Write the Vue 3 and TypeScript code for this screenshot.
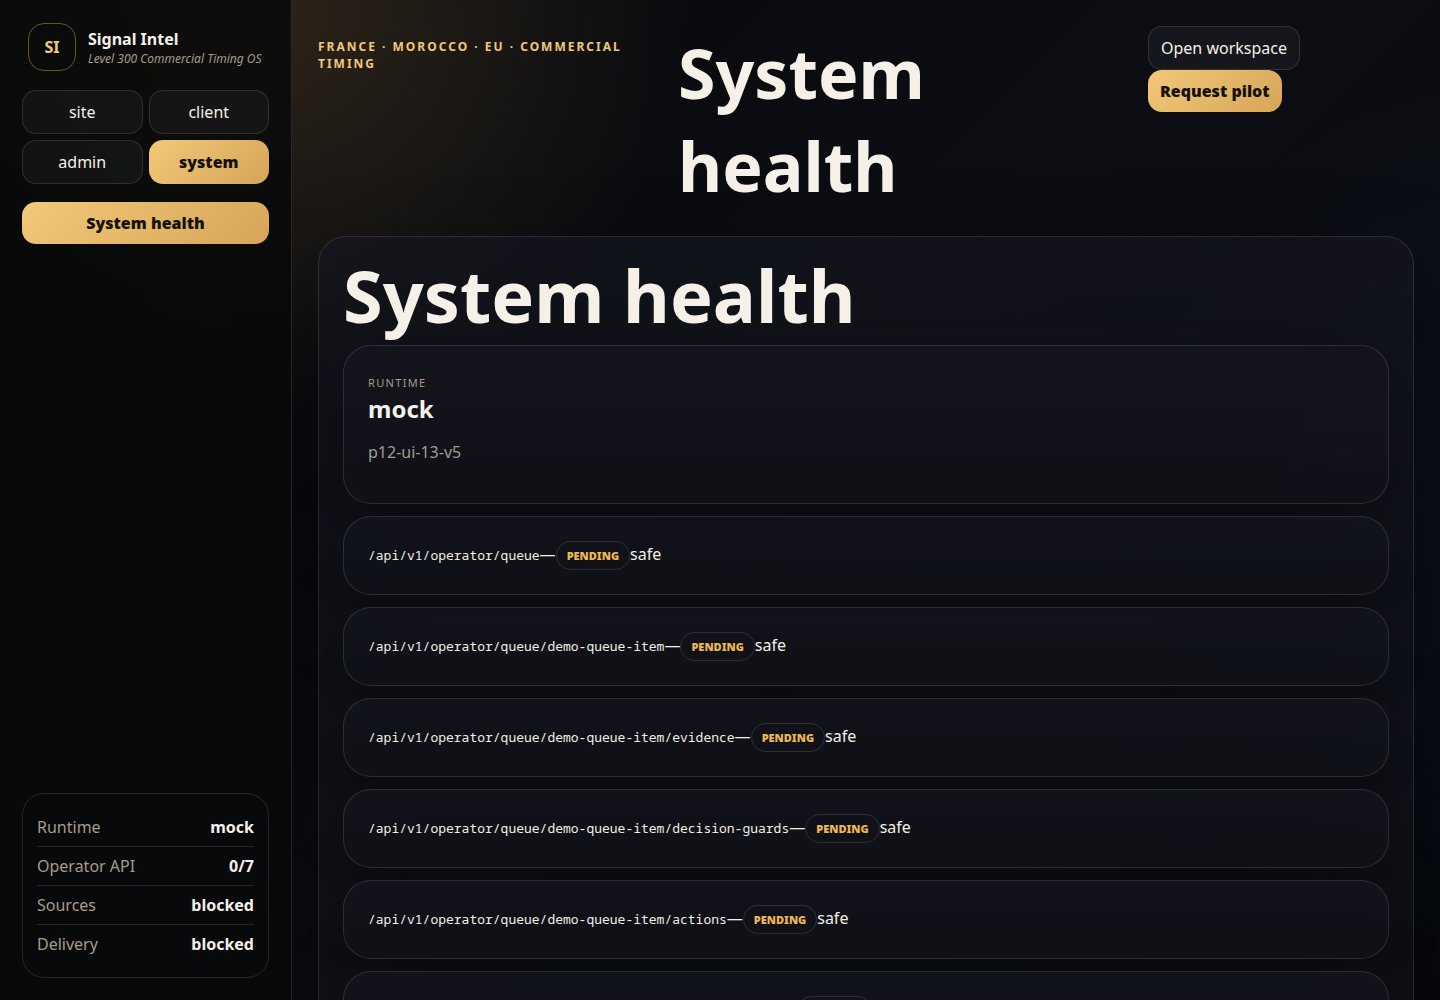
<script setup lang="ts">
import { ref } from 'vue'

interface StatusRow {
  label: string
  value: string
}

const areas: string[] = ['site', 'client', 'admin', 'system']
const activeArea = ref<string>('system')

const status: StatusRow[] = [
  { label: 'Runtime', value: 'mock' },
  { label: 'Operator API', value: '0/7' },
  { label: 'Sources', value: 'blocked' },
  { label: 'Delivery', value: 'blocked' },
]

const endpoints: string[] = [
  '/api/v1/operator/queue',
  '/api/v1/operator/queue/demo-queue-item',
  '/api/v1/operator/queue/demo-queue-item/evidence',
  '/api/v1/operator/queue/demo-queue-item/decision-guards',
  '/api/v1/operator/queue/demo-queue-item/actions',
  '/api/v1/operator/queue/demo-queue-item/delivery-state',
]
</script>

<template>
  <div class="shell">
    <aside class="sidebar">
      <div class="brand">
        <span class="mark">SI</span>
        <div class="brand-text">
          <b>Signal Intel</b>
          <em>Level 300 Commercial Timing OS</em>
        </div>
      </div>
      <div class="switch">
        <button
          v-for="area in areas"
          :key="area"
          type="button"
          class="btn"
          :class="{ primary: area === activeArea }"
          @click="activeArea = area"
        >{{ area }}</button>
      </div>
      <nav class="nav">
        <button type="button" class="btn primary">System health</button>
      </nav>
      <dl class="status">
        <div v-for="row in status" :key="row.label" class="status-row">
          <dt>{{ row.label }}</dt>
          <dd>{{ row.value }}</dd>
        </div>
      </dl>
    </aside>

    <main class="main">
      <header class="topbar">
        <p class="eyebrow">France · Morocco · EU · Commercial timing</p>
        <h1 class="title">System health</h1>
        <div class="actions">
          <button type="button" class="btn">Open workspace</button>
          <button type="button" class="btn primary">Request pilot</button>
        </div>
      </header>

      <section class="panel">
        <h2 class="panel-title">System health</h2>
        <div class="cards">
          <article class="card">
            <small class="metric-label">Runtime</small>
            <strong class="metric">mock</strong>
            <p class="version">p12-ui-13-v5</p>
          </article>
          <article v-for="path in endpoints" :key="path" class="card">
            <code>{{ path }}</code><span>—</span><span class="pill">pending</span><span>safe</span>
          </article>
        </div>
      </section>
    </main>
  </div>
</template>

<style>
body {
  margin: 0;
  background: #050609;
}
</style>

<style scoped>
* {
  box-sizing: border-box;
}

.shell {
  display: grid;
  grid-template-columns: 292px minmax(0, 1fr);
  min-height: 100vh;
  color: #f5f0e8;
  font: 16px "Noto Sans", sans-serif;
  background:
    radial-gradient(circle at 18% 0%, rgba(230, 175, 90, 0.17), transparent 430px) no-repeat,
    radial-gradient(circle at 110% 55%, rgba(40, 80, 160, 0.1), transparent 500px) no-repeat,
    linear-gradient(135deg, #06070a, #0c0e13 50%, #080a0e) no-repeat;
  background-size: 100% 100vh;
  background-attachment: fixed;
}

.sidebar {
  position: sticky;
  top: 0;
  display: flex;
  flex-direction: column;
  gap: 18px;
  height: 100vh;
  padding: 22px;
  border-right: 1px solid rgba(255, 250, 240, 0.12);
  background: rgba(7, 8, 10, 0.82);
}

.brand {
  display: flex;
  align-items: center;
  gap: 12px;
  height: 50px;
  padding: 0 6px;
}

.mark {
  display: grid;
  flex: none;
  place-items: center;
  width: 48px;
  height: 48px;
  border: 1px solid rgba(242, 190, 100, 0.4);
  border-radius: 16px;
  color: #f2c879;
  font-weight: 700;
}

.brand-text {
  display: grid;
  white-space: nowrap;
}

.brand-text em {
  color: #a69c8b;
  font-size: 12px;
}

.switch {
  display: grid;
  grid-template-columns: 1fr 1fr;
  gap: 6px;
}

.nav {
  display: grid;
}

.btn {
  padding: 10px 12px;
  border: 1px solid rgba(255, 250, 240, 0.12);
  border-radius: 14px;
  background: rgba(255, 255, 255, 0.04);
  color: #f5f0e8;
  font: inherit;
  line-height: 22px;
  cursor: pointer;
}

.btn.primary {
  border: 0;
  background: linear-gradient(135deg, #f2c879, #d6a558);
  color: #15110a;
  font-weight: 900;
}

.status {
  margin: auto 0 0;
  padding: 14px;
  border: 1px solid rgba(255, 250, 240, 0.12);
  border-radius: 22px;
}

.status-row {
  display: flex;
  justify-content: space-between;
  padding: 8px 0;
  border-bottom: 1px solid rgba(255, 250, 240, 0.12);
  line-height: 22px;
}

.status-row:last-child {
  border-bottom: 0;
}

.status dt {
  color: #a69c8b;
}

.status dd {
  margin: 0;
  font-weight: 700;
}

.main {
  padding: 26px;
}

.topbar {
  display: grid;
  grid-template-columns: 342fr 452fr 266fr;
  column-gap: 18px;
  align-items: start;
  margin-bottom: 24px;
}

.eyebrow {
  margin: 12px 0;
  color: #f2c879;
  font-size: 12px;
  font-weight: 700;
  line-height: 17px;
  letter-spacing: 2px;
  text-transform: uppercase;
}

.title {
  margin: 0;
  font-size: 68px;
  line-height: 93px;
}

.actions {
  display: flex;
  flex-wrap: wrap;
}

.panel,
.card {
  padding: 24px;
  border: 1px solid rgba(255, 250, 240, 0.12);
  border-radius: 28px;
  background: linear-gradient(180deg, rgba(20, 21, 30, 0.74), rgba(17, 19, 24, 0.74));
  box-shadow: 0 24px 80px rgba(0, 0, 0, 0.35);
}

.panel-title {
  position: relative;
  z-index: 1;
  margin: 0 0 16px;
  font-size: 72px;
  line-height: 68px;
}

.cards {
  display: grid;
  gap: 12px;
}

.metric-label {
  display: block;
  padding: 5px 0 2px;
  color: #a69c8b;
  font-size: 11px;
  line-height: 15px;
  letter-spacing: 0.12em;
  text-transform: uppercase;
}

.metric {
  display: block;
  font-size: 24px;
  line-height: 33px;
}

.version {
  margin: 16px 0;
  color: #a69c8b;
  line-height: 22px;
}

code {
  font: 13px "Noto Sans Mono", "Liberation Mono", monospace;
}

.pill {
  display: inline-block;
  padding: 6px 10px;
  border: 1px solid rgba(255, 250, 240, 0.12);
  border-radius: 999px;
  color: #f0b955;
  font-size: 11px;
  font-weight: 900;
  line-height: 15px;
  text-transform: uppercase;
}
</style>
